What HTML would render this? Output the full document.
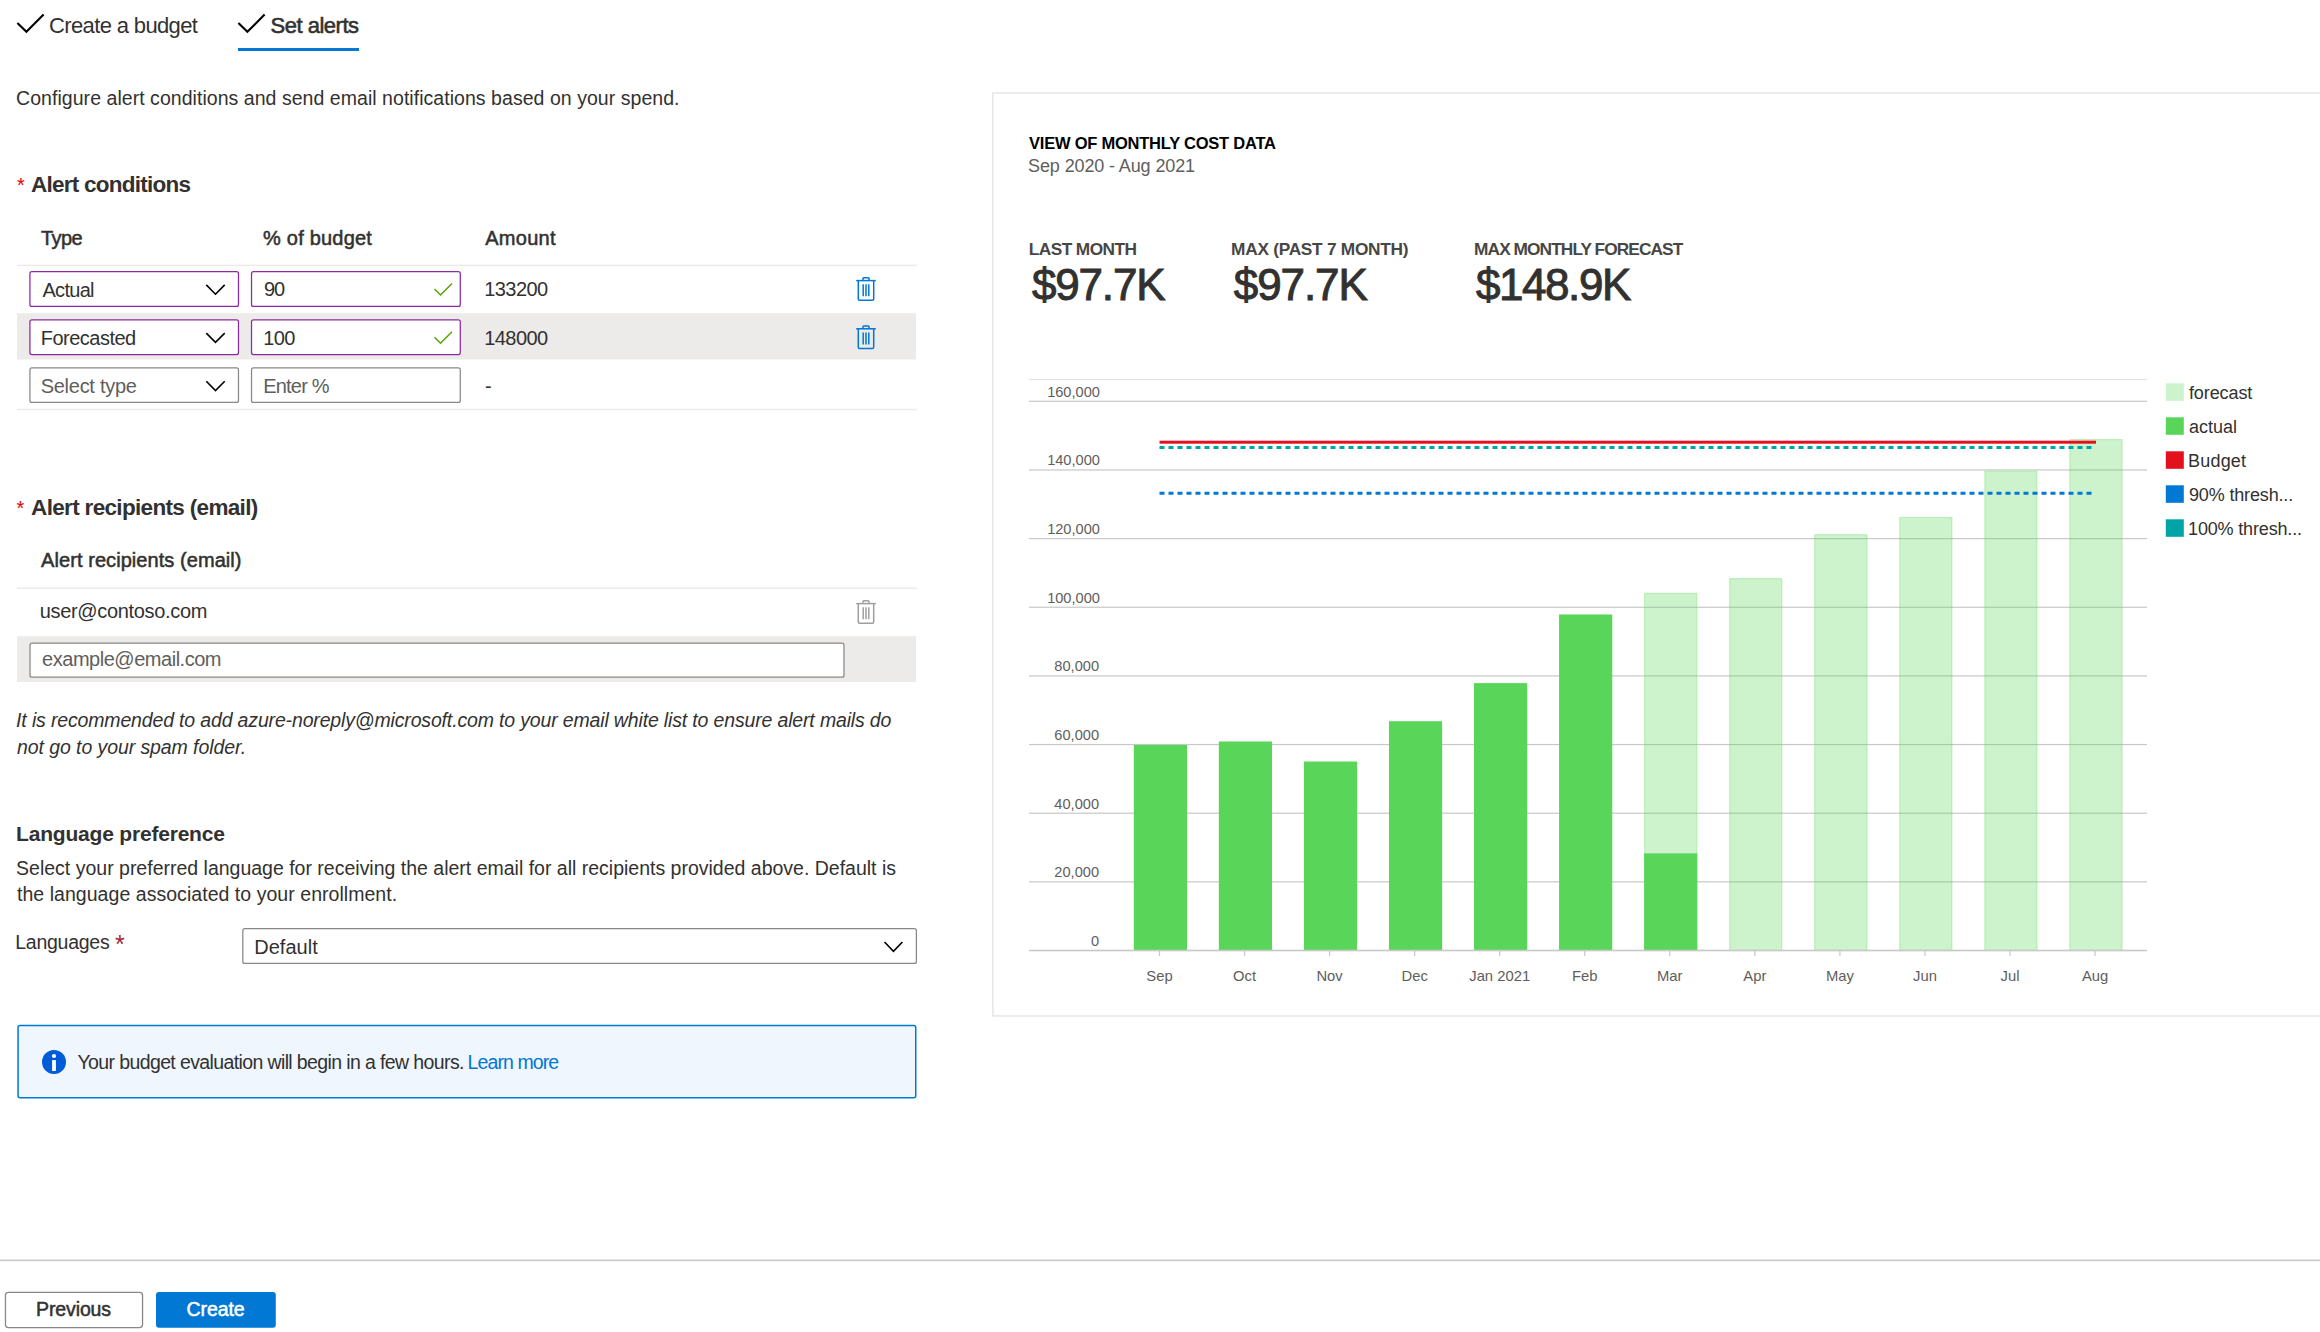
<!DOCTYPE html>
<html><head><meta charset="utf-8">
<style>
html,body{margin:0;padding:0;background:#fff;}
body{width:2320px;height:1332px;position:relative;overflow:hidden;font-family:"Liberation Sans",sans-serif;}
svg{position:absolute;left:0;top:0;}
.t{position:absolute;white-space:nowrap;}
</style></head><body>
<svg width="2320" height="1332" viewBox="0 0 2320 1332">
<path d="M17.4 22.9 L26.4 31.8 L43.6 14.5" fill="none" stroke="#000" stroke-width="2.1"/>
<path d="M238.4 22.9 L247.4 31.8 L264.6 14.5" fill="none" stroke="#000" stroke-width="2.1"/>
<rect x="238" y="48" width="121" height="3" fill="#0078d4"/>
<rect x="17" y="264.65" width="900" height="1.5" fill="#edebe9"/>
<rect x="17" y="408.75" width="900" height="1.5" fill="#edebe9"/>
<rect x="17" y="587.45" width="900" height="1.5" fill="#edebe9"/>
<rect x="17" y="313.2" width="899" height="46.3" fill="#edebe9"/>
<rect x="17" y="636.2" width="899" height="45.8" fill="#edebe9"/>
<rect x="29.925" y="271.625" width="208.54999999999998" height="34.75" rx="2" fill="#fff" stroke="#8b2ba4" stroke-width="1.25"/>
<rect x="251.525" y="271.625" width="208.74999999999997" height="34.75" rx="2" fill="#fff" stroke="#8b2ba4" stroke-width="1.25"/>
<rect x="29.925" y="319.825" width="208.54999999999998" height="34.75" rx="2" fill="#fff" stroke="#8b2ba4" stroke-width="1.25"/>
<rect x="251.525" y="319.825" width="208.74999999999997" height="34.75" rx="2" fill="#fff" stroke="#8b2ba4" stroke-width="1.25"/>
<rect x="29.925" y="367.825" width="208.54999999999998" height="34.55000000000001" rx="2" fill="#fff" stroke="#8a8886" stroke-width="1.25"/>
<rect x="251.525" y="367.825" width="208.74999999999997" height="34.55000000000001" rx="2" fill="#fff" stroke="#8a8886" stroke-width="1.25"/>
<rect x="30.025" y="643.125" width="813.95" height="34.049999999999955" rx="2" fill="#fff" stroke="#8a8886" stroke-width="1.25"/>
<rect x="242.825" y="928.525" width="673.55" height="34.85000000000002" rx="2" fill="#fff" stroke="#8a8886" stroke-width="1.25"/>
<path d="M206.3 284.9 L215.5 294.2 L224.7 284.9" fill="none" stroke="#000" stroke-width="1.6"/>
<path d="M206.3 333.09999999999997 L215.5 342.4 L224.7 333.09999999999997" fill="none" stroke="#000" stroke-width="1.6"/>
<path d="M206.3 381.29999999999995 L215.5 390.6 L224.7 381.29999999999995" fill="none" stroke="#000" stroke-width="1.6"/>
<path d="M884.5 942 L893.45 951.4 L902.4 942" fill="none" stroke="#000" stroke-width="1.6"/>
<path d="M434.5 289 L440.5 295 L452 283.5" fill="none" stroke="#57a300" stroke-width="1.5"/>
<path d="M434.5 337.2 L440.5 343.2 L452 331.7" fill="none" stroke="#57a300" stroke-width="1.5"/>
<g fill="none" stroke="#0078d4" stroke-width="1.5"><path d="M856.2 280.6 H875.8000000000001"/><path d="M863.0 280.6 V278.6 Q863.0 277.75 863.8000000000001 277.75 H868.2 Q869.0 277.75 869.0 278.6 V280.6"/><path d="M858.3000000000001 280.6 V299 Q858.3000000000001 300.2 859.5 300.2 H872.5 Q873.7 300.2 873.7 299 V280.6"/><path d="M863.2 284.3 V296.3 M866.0 284.3 V296.3 M868.8000000000001 284.3 V296.3"/></g>
<g fill="none" stroke="#0078d4" stroke-width="1.5"><path d="M856.2 328.8 H875.8000000000001"/><path d="M863.0 328.8 V326.8 Q863.0 325.95 863.8000000000001 325.95 H868.2 Q869.0 325.95 869.0 326.8 V328.8"/><path d="M858.3000000000001 328.8 V347.2 Q858.3000000000001 348.4 859.5 348.4 H872.5 Q873.7 348.4 873.7 347.2 V328.8"/><path d="M863.2 332.5 V344.5 M866.0 332.5 V344.5 M868.8000000000001 332.5 V344.5"/></g>
<g fill="none" stroke="#a19f9d" stroke-width="1.5"><path d="M856.2 603.6 H875.8000000000001"/><path d="M863.0 603.6 V601.6 Q863.0 600.75 863.8000000000001 600.75 H868.2 Q869.0 600.75 869.0 601.6 V603.6"/><path d="M858.3000000000001 603.6 V622 Q858.3000000000001 623.2 859.5 623.2 H872.5 Q873.7 623.2 873.7 622 V603.6"/><path d="M863.2 607.3 V619.3 M866.0 607.3 V619.3 M868.8000000000001 607.3 V619.3"/></g>
<rect x="18.05" y="1025.45" width="897.7" height="72.2" rx="2" fill="#eff6fe" stroke="#0078d4" stroke-width="1.5"/>
<circle cx="54" cy="1062" r="12" fill="#005bd9"/>
<rect x="52.1" y="1060.1" width="3.8" height="10.9" fill="#fff"/><circle cx="54" cy="1056" r="2.1" fill="#fff"/>
<rect x="0" y="1259.6" width="2320" height="1.5" fill="#c8c6c4"/>
<rect x="5.45" y="1292.45" width="137.09999999999997" height="35.100000000000094" rx="3" fill="#fff" stroke="#8a8886" stroke-width="1.3"/>
<rect x="156" y="1292" width="119.8" height="35.7" rx="3" fill="#0078d4"/>
<rect x="992.9" y="93" width="1400" height="923" fill="none" stroke="#e6e6e6" stroke-width="1.5"/>
<rect x="1029" y="379" width="1118" height="1" fill="#dedede"/>
<rect x="1029" y="881.25" width="1118" height="1.2" fill="#c8c8c8"/>
<rect x="1029" y="812.60" width="1118" height="1.2" fill="#c8c8c8"/>
<rect x="1029" y="743.95" width="1118" height="1.2" fill="#c8c8c8"/>
<rect x="1029" y="675.30" width="1118" height="1.2" fill="#c8c8c8"/>
<rect x="1029" y="606.65" width="1118" height="1.2" fill="#c8c8c8"/>
<rect x="1029" y="538.00" width="1118" height="1.2" fill="#c8c8c8"/>
<rect x="1029" y="469.35" width="1118" height="1.2" fill="#c8c8c8"/>
<rect x="1029" y="400.70" width="1118" height="1.2" fill="#c8c8c8"/>
<rect x="1133.80" y="745.00" width="53.2" height="205.50" fill="#59d659"/>
<rect x="1218.85" y="741.46" width="53.2" height="209.04" fill="#59d659"/>
<rect x="1303.90" y="761.51" width="53.2" height="188.99" fill="#59d659"/>
<rect x="1388.95" y="721.21" width="53.2" height="229.29" fill="#59d659"/>
<rect x="1474.00" y="683.11" width="53.2" height="267.39" fill="#59d659"/>
<rect x="1559.05" y="614.46" width="53.2" height="336.04" fill="#59d659"/>
<rect x="1644.60" y="593.33" width="52.2" height="357.17" fill="rgba(89,214,89,0.3)" stroke="rgba(89,214,89,0.3)" stroke-width="1.2"/>
<rect x="1644.10" y="853.36" width="53.2" height="97.14" fill="#59d659"/>
<rect x="1729.65" y="578.57" width="52.2" height="371.93" fill="rgba(89,214,89,0.3)" stroke="rgba(89,214,89,0.3)" stroke-width="1.2"/>
<rect x="1814.70" y="534.64" width="52.2" height="415.86" fill="rgba(89,214,89,0.3)" stroke="rgba(89,214,89,0.3)" stroke-width="1.2"/>
<rect x="1899.75" y="517.48" width="52.2" height="433.02" fill="rgba(89,214,89,0.3)" stroke="rgba(89,214,89,0.3)" stroke-width="1.2"/>
<rect x="1984.80" y="471.14" width="52.2" height="479.36" fill="rgba(89,214,89,0.3)" stroke="rgba(89,214,89,0.3)" stroke-width="1.2"/>
<rect x="2069.85" y="439.56" width="52.2" height="510.94" fill="rgba(89,214,89,0.3)" stroke="rgba(89,214,89,0.3)" stroke-width="1.2"/>
<rect x="1029" y="949.7" width="1118" height="1.6" fill="#c8c8c8"/>
<rect x="1158.90" y="951" width="1.2" height="5" fill="#c8c8c8"/>
<rect x="1243.95" y="951" width="1.2" height="5" fill="#c8c8c8"/>
<rect x="1329.00" y="951" width="1.2" height="5" fill="#c8c8c8"/>
<rect x="1414.05" y="951" width="1.2" height="5" fill="#c8c8c8"/>
<rect x="1499.10" y="951" width="1.2" height="5" fill="#c8c8c8"/>
<rect x="1584.15" y="951" width="1.2" height="5" fill="#c8c8c8"/>
<rect x="1669.20" y="951" width="1.2" height="5" fill="#c8c8c8"/>
<rect x="1754.25" y="951" width="1.2" height="5" fill="#c8c8c8"/>
<rect x="1839.30" y="951" width="1.2" height="5" fill="#c8c8c8"/>
<rect x="1924.35" y="951" width="1.2" height="5" fill="#c8c8c8"/>
<rect x="2009.40" y="951" width="1.2" height="5" fill="#c8c8c8"/>
<rect x="2094.45" y="951" width="1.2" height="5" fill="#c8c8c8"/>
<rect x="1159.5" y="440.7" width="936.5" height="3" fill="#e3101e"/>
<line x1="1159.5" y1="447.5" x2="2092" y2="447.5" stroke="#00a4a6" stroke-width="3" stroke-dasharray="5 4"/>
<line x1="1159.5" y1="493.3" x2="2092" y2="493.3" stroke="#0078d4" stroke-width="3" stroke-dasharray="5 4"/>
<rect x="2165.8" y="383.30" width="18" height="17.5" fill="#cdf3cd"/>
<rect x="2165.8" y="417.30" width="18" height="17.5" fill="#59d659"/>
<rect x="2165.8" y="451.30" width="18" height="17.5" fill="#e3101e"/>
<rect x="2165.8" y="485.30" width="18" height="17.5" fill="#0078d4"/>
<rect x="2165.8" y="519.30" width="18" height="17.5" fill="#00a4a6"/>
</svg>
<div id="tab1" class="t" style="top:15.00px;font-size:22px;line-height:22px;color:#323130;letter-spacing:-0.643px;left:49.10px;">Create a budget</div>
<div id="tab2" class="t" style="top:15.00px;font-size:22px;line-height:22px;-webkit-text-stroke:0.57px #323130;color:#323130;letter-spacing:-0.500px;left:270.60px;">Set alerts</div>
<div id="desc" class="t" style="top:88.60px;font-size:19.5px;line-height:19.5px;color:#323130;letter-spacing:0.043px;left:16.10px;">Configure alert conditions and send email notifications based on your spend.</div>
<div id="h1star" class="t" style="top:175.00px;font-size:20px;line-height:20px;color:#e50000;left:17.06px;">*</div>
<div id="h1" class="t" style="top:174.20px;font-size:22.5px;line-height:22.5px;font-weight:700;color:#323130;letter-spacing:-0.756px;left:31.12px;">Alert conditions</div>
<div id="th1" class="t" style="top:228.00px;font-size:20px;line-height:20px;-webkit-text-stroke:0.52px #323130;color:#323130;letter-spacing:-0.600px;left:41.00px;">Type</div>
<div id="th2" class="t" style="top:227.80px;font-size:20px;line-height:20px;-webkit-text-stroke:0.52px #323130;color:#323130;letter-spacing:0.198px;left:263.12px;">% of budget</div>
<div id="th3" class="t" style="top:227.80px;font-size:20px;line-height:20px;-webkit-text-stroke:0.52px #323130;color:#323130;letter-spacing:0.252px;left:485.26px;">Amount</div>
<div id="r1a" class="t" style="top:280.00px;font-size:20px;line-height:20px;color:#323130;letter-spacing:-0.720px;left:42.50px;">Actual</div>
<div id="r1b" class="t" style="top:279.00px;font-size:20px;line-height:20px;color:#323130;letter-spacing:-1.080px;left:264.08px;">90</div>
<div id="r1c" class="t" style="top:279.00px;font-size:20px;line-height:20px;color:#323130;letter-spacing:-0.540px;left:484.20px;">133200</div>
<div id="r2a" class="t" style="top:327.50px;font-size:20px;line-height:20px;color:#323130;letter-spacing:-0.500px;left:40.70px;">Forecasted</div>
<div id="r2b" class="t" style="top:327.50px;font-size:20px;line-height:20px;color:#323130;letter-spacing:-0.540px;left:263.18px;">100</div>
<div id="r2c" class="t" style="top:327.50px;font-size:20px;line-height:20px;color:#323130;letter-spacing:-0.540px;left:484.20px;">148000</div>
<div id="r3a" class="t" style="top:376.00px;font-size:20px;line-height:20px;color:#605e5c;letter-spacing:-0.270px;left:40.70px;">Select type</div>
<div id="r3b" class="t" style="top:375.50px;font-size:20px;line-height:20px;color:#605e5c;letter-spacing:-0.780px;left:263.18px;">Enter %</div>
<div id="r3c" class="t" style="top:375.50px;font-size:20px;line-height:20px;color:#323130;left:485.10px;">-</div>
<div id="h2star" class="t" style="top:498.00px;font-size:20px;line-height:20px;color:#e50000;left:16.58px;">*</div>
<div id="h2" class="t" style="top:497.00px;font-size:22.5px;line-height:22.5px;font-weight:700;color:#323130;letter-spacing:-0.673px;left:31.12px;">Alert recipients (email)</div>
<div id="th4" class="t" style="top:549.70px;font-size:20px;line-height:20px;-webkit-text-stroke:0.52px #323130;color:#323130;letter-spacing:0.063px;left:41.12px;">Alert recipients (email)</div>
<div id="email1" class="t" style="top:601.00px;font-size:20px;line-height:20px;color:#323130;letter-spacing:-0.324px;left:39.68px;">user@contoso.com</div>
<div id="email2" class="t" style="top:649.00px;font-size:20px;line-height:20px;color:#605e5c;letter-spacing:-0.472px;left:42.06px;">example@email.com</div>
<div id="note1" class="t" style="top:711.30px;font-size:19.5px;line-height:19.5px;font-style:italic;color:#323130;letter-spacing:-0.157px;left:16.10px;">It is recommended to add azure-noreply@microsoft.com to your email white list to ensure alert mails do</div>
<div id="note2" class="t" style="top:737.60px;font-size:19.5px;line-height:19.5px;font-style:italic;color:#323130;letter-spacing:-0.083px;left:17.00px;">not go to your spam folder.</div>
<div id="h3" class="t" style="top:822.50px;font-size:21px;line-height:21px;font-weight:700;color:#323130;letter-spacing:-0.200px;left:16.10px;">Language preference</div>
<div id="lang1" class="t" style="top:858.50px;font-size:19.5px;line-height:19.5px;color:#323130;letter-spacing:-0.002px;left:16.10px;">Select your preferred language for receiving the alert email for all recipients provided above. Default is</div>
<div id="lang2" class="t" style="top:884.80px;font-size:19.5px;line-height:19.5px;color:#323130;letter-spacing:0.043px;left:17.00px;">the language associated to your enrollment.</div>
<div id="langlbl" class="t" style="top:933.20px;font-size:19.5px;line-height:19.5px;color:#323130;letter-spacing:-0.247px;left:15.20px;">Languages</div>
<div id="langstar" class="t" style="top:931.50px;font-size:25px;line-height:25px;color:#a4262c;left:115.08px;">*</div>
<div id="default" class="t" style="top:937.20px;font-size:20px;line-height:20px;color:#323130;letter-spacing:0.030px;left:254.20px;">Default</div>
<div id="info" class="t" style="top:1053.00px;font-size:19.5px;line-height:19.5px;color:#323130;letter-spacing:-0.619px;left:77.50px;">Your budget evaluation will begin in a few hours.</div>
<div id="learn" class="t" style="top:1053.00px;font-size:19.5px;line-height:19.5px;color:#0078d4;letter-spacing:-0.900px;left:467.60px;">Learn more</div>
<div id="prev" class="t" style="top:1299.60px;font-size:19.5px;line-height:19.5px;-webkit-text-stroke:0.51px #323130;color:#323130;letter-spacing:-0.129px;left:36.10px;">Previous</div>
<div id="create" class="t" style="top:1299.60px;font-size:19.5px;line-height:19.5px;-webkit-text-stroke:0.51px #ffffff;color:#ffffff;letter-spacing:-0.108px;left:186.60px;">Create</div>
<div id="ct" class="t" style="top:134.60px;font-size:16.5px;line-height:16.5px;font-weight:700;color:#000000;letter-spacing:-0.225px;left:1029.00px;">VIEW OF MONTHLY COST DATA</div>
<div id="cs" class="t" style="top:157.00px;font-size:18px;line-height:18px;color:#605e5c;letter-spacing:-0.120px;left:1028.10px;">Sep 2020 - Aug 2021</div>
<div id="k1l" class="t" style="top:241.00px;font-size:17.3px;line-height:17.3px;font-weight:700;color:#484644;letter-spacing:-0.580px;left:1028.82px;">LAST MONTH</div>
<div id="k2l" class="t" style="top:241.00px;font-size:17.3px;line-height:17.3px;font-weight:700;color:#484644;letter-spacing:-0.275px;left:1231.10px;">MAX (PAST 7 MONTH)</div>
<div id="k3l" class="t" style="top:241.00px;font-size:17.3px;line-height:17.3px;font-weight:700;color:#484644;letter-spacing:-0.919px;left:1474.10px;">MAX MONTHLY FORECAST</div>
<div id="k1v" class="t" style="top:262.80px;font-size:44px;line-height:44px;-webkit-text-stroke:0.97px #323130;color:#323130;letter-spacing:-1.188px;left:1032.00px;">$97.7K</div>
<div id="k2v" class="t" style="top:262.80px;font-size:44px;line-height:44px;-webkit-text-stroke:0.97px #323130;color:#323130;letter-spacing:-1.080px;left:1233.78px;">$97.7K</div>
<div id="k3v" class="t" style="top:262.80px;font-size:44px;line-height:44px;-webkit-text-stroke:0.97px #323130;color:#323130;letter-spacing:-1.440px;left:1476.00px;">$148.9K</div>
<div id="yl0" class="t" style="top:934.00px;font-size:14.6px;line-height:14.6px;color:#605e5c;right:1221.00px;text-align:right;">0</div>
<div id="yl1" class="t" style="top:865.35px;font-size:14.6px;line-height:14.6px;color:#605e5c;right:1221.00px;text-align:right;">20,000</div>
<div id="yl2" class="t" style="top:796.70px;font-size:14.6px;line-height:14.6px;color:#605e5c;right:1221.00px;text-align:right;">40,000</div>
<div id="yl3" class="t" style="top:728.05px;font-size:14.6px;line-height:14.6px;color:#605e5c;right:1221.00px;text-align:right;">60,000</div>
<div id="yl4" class="t" style="top:659.40px;font-size:14.6px;line-height:14.6px;color:#605e5c;right:1221.00px;text-align:right;">80,000</div>
<div id="yl5" class="t" style="top:590.75px;font-size:14.6px;line-height:14.6px;color:#605e5c;right:1220.10px;text-align:right;">100,000</div>
<div id="yl6" class="t" style="top:522.10px;font-size:14.6px;line-height:14.6px;color:#605e5c;right:1220.10px;text-align:right;">120,000</div>
<div id="yl7" class="t" style="top:453.45px;font-size:14.6px;line-height:14.6px;color:#605e5c;right:1220.10px;text-align:right;">140,000</div>
<div id="yl8" class="t" style="top:384.80px;font-size:14.6px;line-height:14.6px;color:#605e5c;right:1220.10px;text-align:right;">160,000</div>
<div id="ml0" class="t" style="top:969.00px;font-size:14.8px;line-height:14.8px;color:#605e5c;left:859.50px;width:600px;text-align:center;">Sep</div>
<div id="ml1" class="t" style="top:969.00px;font-size:14.8px;line-height:14.8px;color:#605e5c;left:944.55px;width:600px;text-align:center;">Oct</div>
<div id="ml2" class="t" style="top:969.00px;font-size:14.8px;line-height:14.8px;color:#605e5c;left:1029.60px;width:600px;text-align:center;">Nov</div>
<div id="ml3" class="t" style="top:969.00px;font-size:14.8px;line-height:14.8px;color:#605e5c;left:1114.65px;width:600px;text-align:center;">Dec</div>
<div id="ml4" class="t" style="top:969.00px;font-size:14.8px;line-height:14.8px;color:#605e5c;left:1199.70px;width:600px;text-align:center;">Jan 2021</div>
<div id="ml5" class="t" style="top:969.00px;font-size:14.8px;line-height:14.8px;color:#605e5c;left:1284.75px;width:600px;text-align:center;">Feb</div>
<div id="ml6" class="t" style="top:969.00px;font-size:14.8px;line-height:14.8px;color:#605e5c;left:1369.80px;width:600px;text-align:center;">Mar</div>
<div id="ml7" class="t" style="top:969.00px;font-size:14.8px;line-height:14.8px;color:#605e5c;left:1454.85px;width:600px;text-align:center;">Apr</div>
<div id="ml8" class="t" style="top:969.00px;font-size:14.8px;line-height:14.8px;color:#605e5c;left:1539.90px;width:600px;text-align:center;">May</div>
<div id="ml9" class="t" style="top:969.00px;font-size:14.8px;line-height:14.8px;color:#605e5c;left:1624.95px;width:600px;text-align:center;">Jun</div>
<div id="ml10" class="t" style="top:969.00px;font-size:14.8px;line-height:14.8px;color:#605e5c;left:1710.00px;width:600px;text-align:center;">Jul</div>
<div id="ml11" class="t" style="top:969.00px;font-size:14.8px;line-height:14.8px;color:#605e5c;left:1795.05px;width:600px;text-align:center;">Aug</div>
<div id="lg0" class="t" style="top:383.80px;font-size:18px;line-height:18px;color:#323130;letter-spacing:-0.103px;left:2188.98px;">forecast</div>
<div id="lg1" class="t" style="top:417.80px;font-size:18px;line-height:18px;color:#323130;left:2188.98px;">actual</div>
<div id="lg2" class="t" style="top:451.80px;font-size:18px;line-height:18px;color:#323130;letter-spacing:0.180px;left:2188.08px;">Budget</div>
<div id="lg3" class="t" style="top:485.80px;font-size:18px;line-height:18px;color:#323130;letter-spacing:-0.150px;left:2188.98px;">90% thresh...</div>
<div id="lg4" class="t" style="top:519.80px;font-size:18px;line-height:18px;color:#323130;letter-spacing:-0.166px;left:2188.08px;">100% thresh...</div>
</body></html>
